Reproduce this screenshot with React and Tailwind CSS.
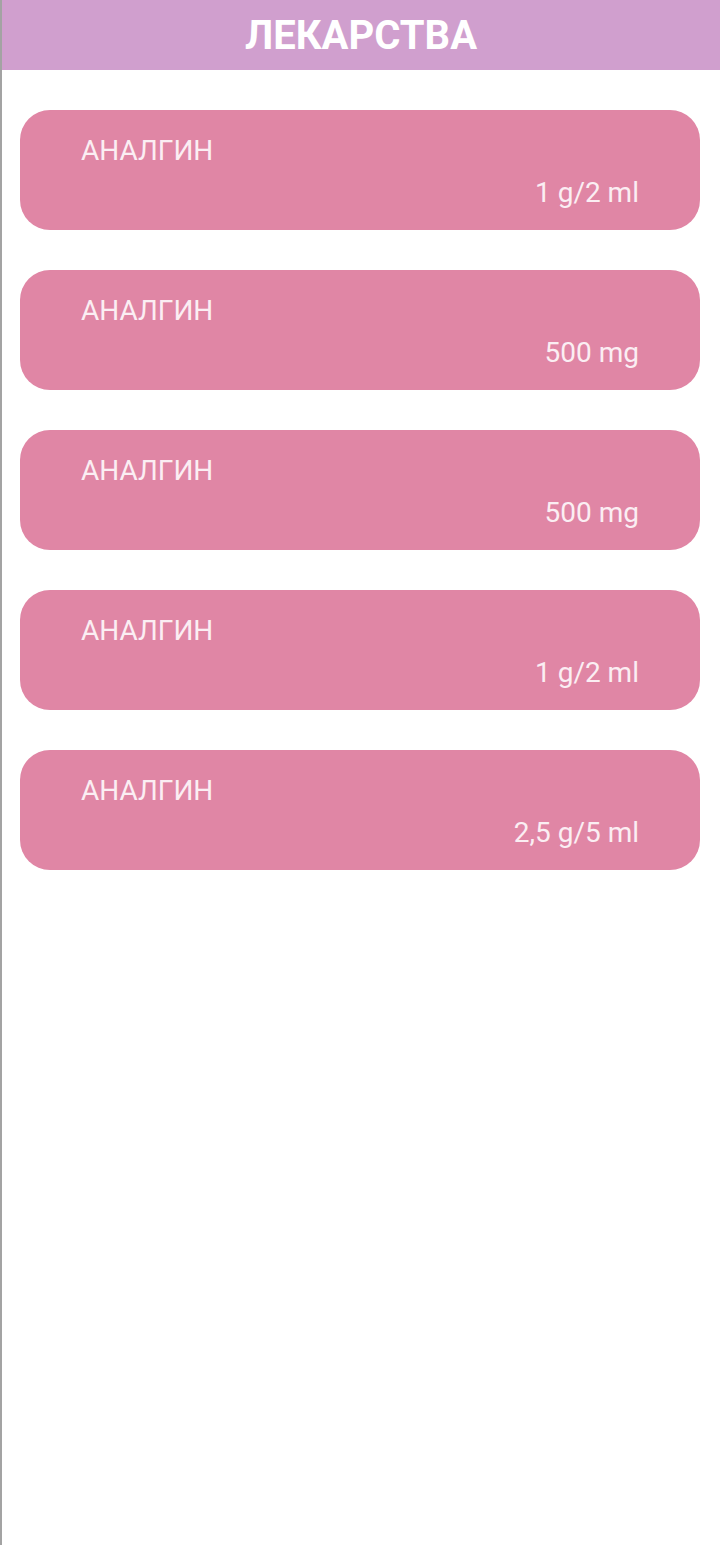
const meds = [
  { name: "АНАЛГИН", dose: "1 g/2 ml" },
  { name: "АНАЛГИН", dose: "500 mg" },
  { name: "АНАЛГИН", dose: "500 mg" },
  { name: "АНАЛГИН", dose: "1 g/2 ml" },
  { name: "АНАЛГИН", dose: "2,5 g/5 ml" },
];

function MedCard({ med }) {
  return (
    <div className="h-[120px] rounded-[30px] bg-[#e086a5] px-[61px] pt-[25px] flex flex-col text-[#fbeef3]">
      <div className="text-[28px] leading-[32px]">{med.name}</div>
      <div className="text-[28px] leading-[32px] text-right mt-[10px]">{med.dose}</div>
    </div>
  );
}

export default function App() {
  return (
    <div
      className="h-[1545px] bg-white border-l-2 border-[#a3a3a3]"
      style={{ fontFamily: "Roboto, 'Noto Sans', sans-serif" }}
    >
      <header className="h-[70px] bg-[#d09fce] flex items-center justify-center pt-[2px]">
        <h1 className="text-white font-bold text-[40px] leading-none">ЛЕКАРСТВА</h1>
      </header>
      <div className="flex flex-col gap-10 pt-10 pl-[18px] pr-5">
        {meds.map((m, i) => (
          <MedCard key={i} med={m} />
        ))}
      </div>
    </div>
  );
}
